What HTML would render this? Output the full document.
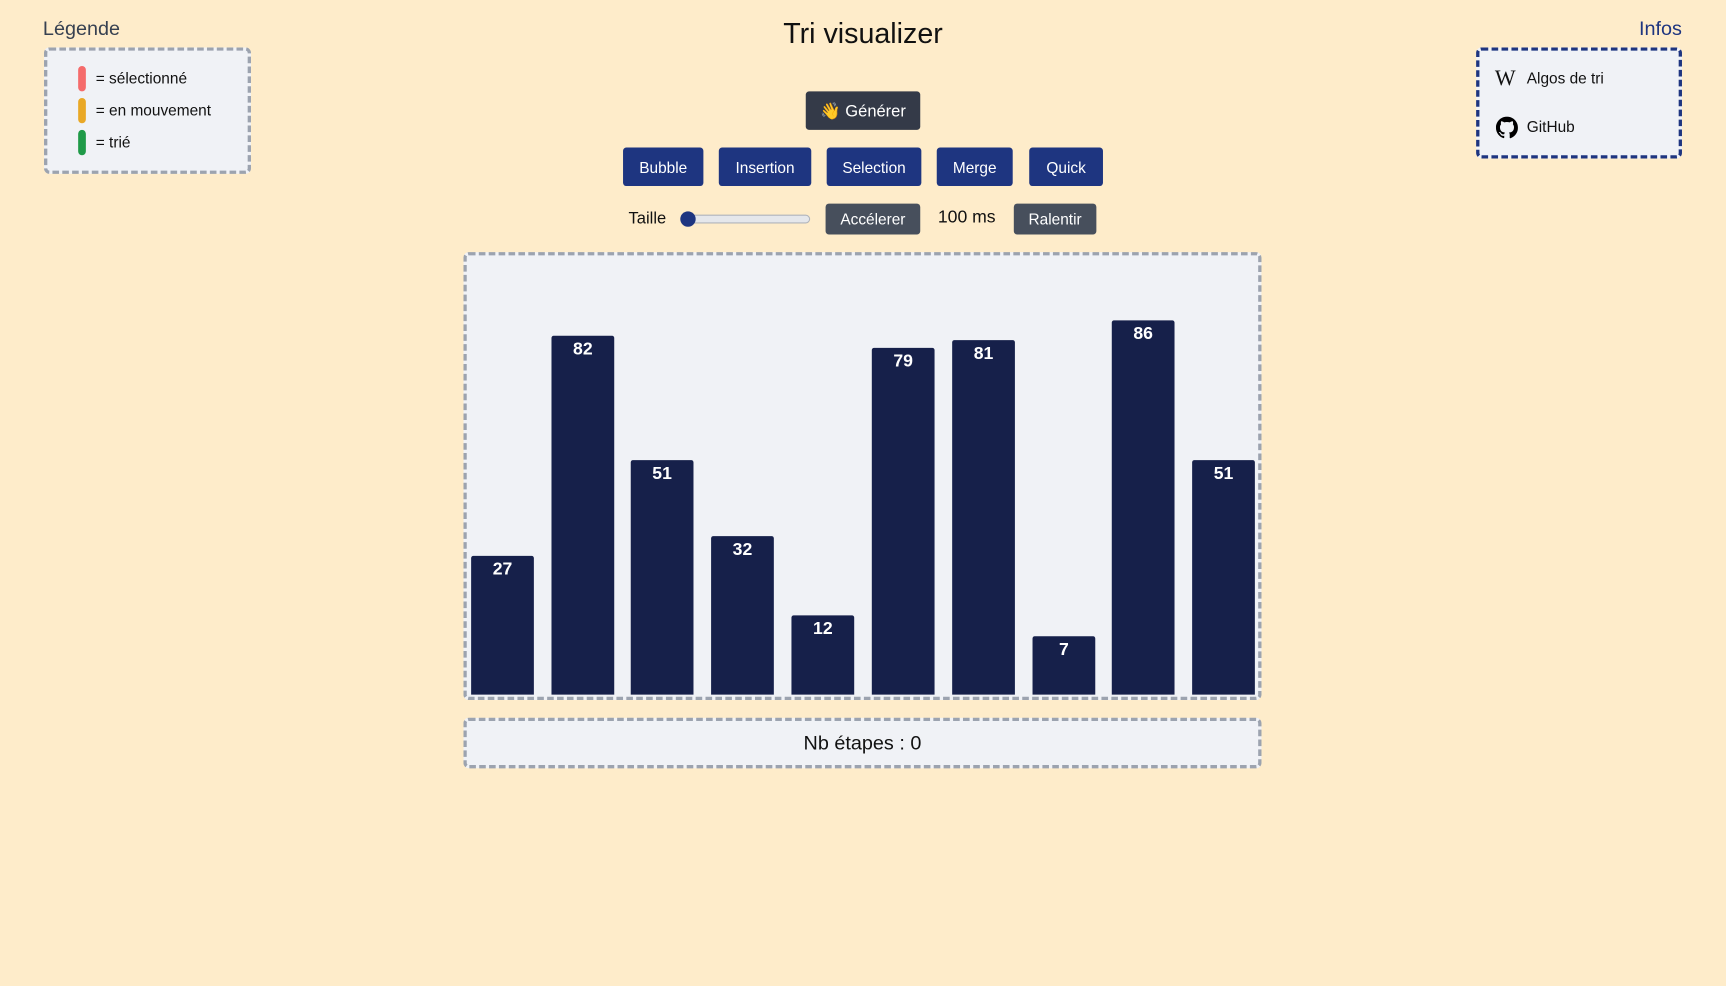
<!DOCTYPE html>
<html><head><meta charset="utf-8"><style>
html,body{margin:0;padding:0;background:#feecca;overflow:hidden}
#w{position:absolute;left:0;top:0;width:1568px;height:896px;transform:scale(1.10077);transform-origin:0 0;font-family:"Liberation Sans",sans-serif;color:#111}
.a{position:absolute}
.box{position:absolute;background:#f0f2f6;border:3px dashed #9ca3af;border-radius:5px;box-sizing:border-box}
.btn{position:absolute;color:#fff;border-radius:3px;font-size:14px;display:flex;align-items:center;justify-content:center}
.blue{background:#1e3580}
.pill{position:absolute;left:71px;width:7px;height:23px;border-radius:4px}
.lt{position:absolute;left:87px;font-size:14px}
.bar{position:absolute;width:57px;bottom:265px;background:#16204a;border-radius:2px 2px 0 0;color:#fff;font-weight:bold;font-size:16px;text-align:center;box-sizing:border-box;padding-top:4px}
</style></head><body><div id="w">
<div class="a" style="left:39px;top:16px;font-size:18px;color:#374151">Légende</div>
<div class="box" style="left:40px;top:43px;width:188px;height:115px"></div>
<div class="pill" style="top:60px;background:#f56b6b"></div><div class="lt" style="top:63px">= sélectionné</div>
<div class="pill" style="top:89px;background:#e9a826"></div><div class="lt" style="top:92px">= en mouvement</div>
<div class="pill" style="top:118px;background:#1f9a48"></div><div class="lt" style="top:121px">= trié</div>

<div class="a" style="left:0;width:1568px;top:15px;text-align:center;font-size:26px">Tri visualizer</div>
<div class="btn" style="left:732px;top:83px;width:104px;height:35px;background:#343a48;font-size:15px">👋 Générer</div>
<div class="btn blue" style="left:566px;top:134px;width:73px;height:35px">Bubble</div>
<div class="btn blue" style="left:653px;top:134px;width:84px;height:35px">Insertion</div>
<div class="btn blue" style="left:751px;top:134px;width:86px;height:35px">Selection</div>
<div class="btn blue" style="left:851px;top:134px;width:69px;height:35px">Merge</div>
<div class="btn blue" style="left:935px;top:134px;width:67px;height:35px">Quick</div>
<div class="a" style="left:571px;top:190px;font-size:15px">Taille</div>
<div class="a" style="left:619px;top:195px;width:115px;height:6px;background:#e5e7eb;border:1px solid #b0b4bb;border-radius:4px"></div>
<div class="a" style="left:618px;top:192px;width:14px;height:14px;border-radius:50%;background:#1e3580"></div>
<div class="btn" style="left:750px;top:185px;width:86px;height:28px;background:#474f5c">Accélerer</div>
<div class="a" style="left:852px;top:189px;font-size:16px">100 ms</div>
<div class="btn" style="left:921px;top:185px;width:75px;height:28px;background:#474f5c">Ralentir</div>

<div class="box" style="left:421px;top:229px;width:725px;height:407px"></div>
<div class="bar" style="left:428px;height:126px">27</div>
<div class="bar" style="left:501px;height:326px">82</div>
<div class="bar" style="left:573px;height:213px">51</div>
<div class="bar" style="left:646px;height:144px">32</div>
<div class="bar" style="left:719px;height:72px">12</div>
<div class="bar" style="left:792px;height:315px">79</div>
<div class="bar" style="left:865px;height:322px">81</div>
<div class="bar" style="left:938px;height:53px">7</div>
<div class="bar" style="left:1010px;height:340px">86</div>
<div class="bar" style="left:1083px;height:213px">51</div>

<div class="box" style="left:421px;top:652px;width:725px;height:46px;display:flex;align-items:center;justify-content:center;font-size:18px">Nb étapes : 0</div>

<div class="a" style="right:40px;top:16px;font-size:18px;color:#1e3580">Infos</div>
<div class="box" style="left:1341px;top:43px;width:187px;height:101px;border-color:#1e3580"></div>
<div class="a" style="left:1358px;top:60px;font-family:'Liberation Serif',serif;font-size:20px;letter-spacing:-3px">W</div>
<div class="a" style="left:1387px;top:63px;font-size:14px">Algos de tri</div>
<svg class="a" style="left:1359px;top:106px" width="20" height="20" viewBox="0 0 16 16"><path fill="#000" d="M8 0C3.58 0 0 3.58 0 8c0 3.54 2.29 6.53 5.47 7.59.4.07.55-.17.55-.38v-1.33c-2.23.48-2.7-1.07-2.7-1.07-.36-.92-.89-1.17-.89-1.17-.73-.5.06-.49.06-.49.8.06 1.23.83 1.23.83.72 1.22 1.87.87 2.33.67.07-.52.28-.87.51-1.07-1.78-.2-3.64-.89-3.64-3.95 0-.87.31-1.59.82-2.15-.08-.2-.36-1.02.08-2.12 0 0 .67-.21 2.2.82a7.6 7.6 0 0 1 4 0c1.53-1.04 2.2-.82 2.2-.82.44 1.1.16 1.92.08 2.12.51.56.82 1.27.82 2.15 0 3.07-1.87 3.75-3.65 3.95.29.25.54.73.54 1.48v2.2c0 .21.15.46.55.38A8 8 0 0 0 16 8c0-4.42-3.58-8-8-8z"/></svg>
<div class="a" style="left:1387px;top:107px;font-size:14px">GitHub</div>
</div></body></html>
